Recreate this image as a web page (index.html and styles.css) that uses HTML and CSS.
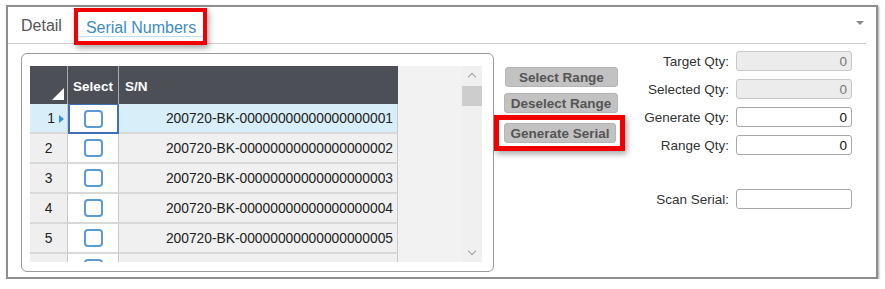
FILE: index.html
```html
<!DOCTYPE html>
<html lang="en">
<head>
    <meta charset="UTF-8">
    <title>Serial Numbers</title>
    <link rel="stylesheet" href="styles.css">
</head>
<body>

    <div class="frame">
        <div class="tab-bar">
            <span class="tab">Detail</span>
            <span class="tab active">Serial Numbers</span>
            <span class="caret"></span>
        </div>

        <div class="tab-body">
            <div class="panel">
                <div class="grid">
                    <div class="grid-main">
                        <div class="grid-row head">
                            <div class="cell num"><span class="corner"></span></div>
                            <div class="cell sel">Select</div>
                            <div class="cell sn">S/N</div>
                        </div>
                        <div class="grid-row current">
                            <div class="cell num">1<span class="marker"></span></div>
                            <div class="cell sel focus"><span class="check"></span></div>
                            <div class="cell sn">200720-BK-00000000000000000001</div>
                        </div>
                        <div class="grid-row">
                            <div class="cell num">2</div>
                            <div class="cell sel"><span class="check"></span></div>
                            <div class="cell sn">200720-BK-00000000000000000002</div>
                        </div>
                        <div class="grid-row">
                            <div class="cell num">3</div>
                            <div class="cell sel"><span class="check"></span></div>
                            <div class="cell sn">200720-BK-00000000000000000003</div>
                        </div>
                        <div class="grid-row">
                            <div class="cell num">4</div>
                            <div class="cell sel"><span class="check"></span></div>
                            <div class="cell sn">200720-BK-00000000000000000004</div>
                        </div>
                        <div class="grid-row">
                            <div class="cell num">5</div>
                            <div class="cell sel"><span class="check"></span></div>
                            <div class="cell sn">200720-BK-00000000000000000005</div>
                        </div>
                        <div class="grid-row">
                            <div class="cell num"></div>
                            <div class="cell sel"><span class="check"></span></div>
                            <div class="cell sn"></div>
                        </div>
                    </div>
                    <div class="scrollbar">
                        <span class="arrow up"></span>
                        <span class="thumb"></span>
                        <span class="arrow down"></span>
                    </div>
                </div>
            </div>

            <div class="actions">
                <button class="btn btn-select">Select Range</button>
                <button class="btn">Deselect Range</button>
                <div class="mark">
                    <button class="btn">Generate Serial</button>
                </div>
            </div>

            <div class="qty-form">
                <label>Target Qty:</label>
                <input type="text" value="0" disabled>
                <label>Selected Qty:</label>
                <input type="text" value="0" disabled>
                <label>Generate Qty:</label>
                <input type="text" value="0">
                <label>Range Qty:</label>
                <input type="text" value="0">
                <label class="scan">Scan Serial:</label>
                <input type="text" class="scan" value="">
            </div>
        </div>
    </div>

</body>
</html>
```

FILE: styles.css
```css
body {
    margin: 0;
    background-color: #fff;
    font-family: 'Liberation Sans', Arial, sans-serif;
    color: #333;
}

.frame {
    box-sizing: border-box;
    width: 872px;
    height: 274px;
    margin: 5px 0 0 6px;
    border: 2px solid #8e8e8e;
    box-shadow: 1px 1px 2px rgba(0, 0, 0, 0.35);
    background-color: #fff;
}

/* tabs */
.tab-bar {
    display: flex;
    align-items: center;
    height: 36px;
    margin-right: 10px;
    padding-left: 13px;
    border-bottom: 1px solid #cfcfcf;
}

.tab {
    font-size: 16px;
    color: #555;
    padding-top: 2px;
}

.tab.active {
    align-self: flex-start;
    box-sizing: border-box;
    height: 37px;
    margin: 1px 0 0 12px;
    padding: 2px 7px 0 8px;
    display: flex;
    align-items: center;
    color: #3d8cc4;
    border: 4px solid #f00000;
    box-shadow: 2px 3px 6px rgba(0, 0, 0, 0.35);
    background: linear-gradient(to top, transparent 4px, #c5dff0 4px, #c5dff0 5px, transparent 5px);
}

.caret {
    margin-left: auto;
    margin-right: 2px;
    margin-top: -4px;
    width: 0;
    height: 0;
    border-left: 4px solid transparent;
    border-right: 4px solid transparent;
    border-top: 4px solid #8a8a8a;
}

/* body of the tab */
.tab-body {
    display: flex;
    align-items: flex-start;
    padding: 8px 0 0 13px;
}

.panel {
    box-sizing: border-box;
    width: 473px;
    height: 219px;
    margin-top: 1px;
    padding: 12px 11px 0 8px;
    border: 1px solid #9a9a9a;
    border-radius: 6px;
}

.grid {
    display: flex;
    height: 196px;
    overflow: hidden;
    background-color: #f2f2f2;
}

.grid-main {
    width: 432px;
}

.grid-row {
    display: flex;
    height: 30px;
    font-size: 13.8px;
    color: #222;
}

.grid-row.head {
    height: 38px;
    color: #fff;
    font-weight: bold;
    font-size: 13.5px;
}

.cell {
    box-sizing: border-box;
    display: flex;
    align-items: center;
    border-right: 1px solid #c9c9c9;
    border-bottom: 2px solid #d9d9d9;
}

.head .cell {
    border-right: 1px solid #a9abb0;
    border-bottom: none;
}

.head .cell.sn {
    border-right: none;
}

.cell.num {
    position: relative;
    width: 38px;
    justify-content: center;
    background-color: #efefef;
}

.cell.sel {
    width: 51px;
    justify-content: center;
    background-color: #fff;
}

.cell.sn {
    width: 279px;
    justify-content: flex-end;
    padding-right: 4px;
    background-color: #f0f0f0;
}

.head .cell.num,
.head .cell.sel,
.head .cell.sn {
    background-color: #4d4f57;
}

.head .cell.sel {
    padding-top: 2px;
}

.head .cell.sn {
    justify-content: flex-start;
    padding-left: 6px;
    padding-top: 2px;
}

.current .cell.num,
.current .cell.sn {
    background-color: #d8eef8;
}

.cell.focus {
    border: 2px solid #3f6fb6;
    border-top: 1px solid #3f6fb6;
}

.check {
    box-sizing: border-box;
    width: 19px;
    height: 18px;
    border: 2px solid #5b9bd0;
    border-radius: 4px;
    background-color: #fff;
}

.corner {
    position: absolute;
    right: 3px;
    bottom: 4px;
    width: 0;
    height: 0;
    border-left: 12px solid transparent;
    border-bottom: 12px solid #fff;
}

.marker {
    position: absolute;
    right: 3px;
    top: 11px;
    width: 0;
    height: 0;
    border-top: 4px solid transparent;
    border-bottom: 4px solid transparent;
    border-left: 5px solid #2f8fe0;
}

.grid-row .cell.num {
    justify-content: flex-end;
    padding-right: 12px;
}

.head .cell.num {
    padding-right: 0;
}

.grid-row:nth-child(n+3) .cell.num {
    justify-content: center;
    padding-right: 0;
}

/* scrollbar */
.scrollbar {
    display: flex;
    flex-direction: column;
    align-items: center;
    width: 20px;
    background-color: #f0f0f0;
}

.arrow {
    width: 5px;
    height: 5px;
    border-left: 1.5px solid #a0a0a0;
    border-top: 1.5px solid #a0a0a0;
}

.arrow.up {
    margin-top: 8px;
    transform: rotate(45deg);
}

.arrow.down {
    margin-top: auto;
    margin-bottom: 8px;
    transform: rotate(225deg);
}

.thumb {
    width: 20px;
    height: 20px;
    margin-top: 6px;
    background-color: #cdcdcd;
}

/* buttons */
.actions {
    display: flex;
    flex-direction: column;
    align-items: flex-start;
    width: 134px;
    margin-top: 15px;
}

.btn {
    box-sizing: border-box;
    height: 20px;
    width: 114px;
    margin-left: 10px;
    padding: 0;
    font-family: 'Liberation Sans', Arial, sans-serif;
    font-size: 13.5px;
    font-weight: bold;
    color: #555;
    background-color: #c2c2c2;
    border: 1px solid #b5b5b5;
    border-radius: 3px;
    margin-bottom: 6px;
}

.btn-select {
    margin-left: 11px;
    width: 113px;
}

.mark {
    box-sizing: border-box;
    width: 131px;
    height: 36px;
    margin-top: -4px;
    border: 5px solid #f00000;
    box-shadow: 2px 3px 6px rgba(0, 0, 0, 0.35);
    padding-top: 3px;
}

.mark .btn {
    margin-left: 5px;
    margin-bottom: 0;
    width: 112px;
}

/* quantity form */
.qty-form {
    display: grid;
    grid-template-columns: auto 116px;
    column-gap: 7px;
    row-gap: 8px;
    align-items: center;
    margin-left: auto;
    margin-right: 24px;
    margin-top: -1px;
}

.qty-form label {
    font-size: 13.5px;
    text-align: right;
    color: #333;
}

.qty-form input {
    box-sizing: border-box;
    height: 20px;
    width: 116px;
    padding: 0 4px;
    text-align: right;
    font-family: 'Liberation Sans', Arial, sans-serif;
    font-size: 13.5px;
    color: #111;
    border: 1px solid #a8a8a8;
    border-radius: 3px;
    background-color: #fff;
}

.qty-form input:disabled {
    background-color: #ececec;
    border-color: #c8c8c8;
    color: #777;
}

.qty-form .scan {
    margin-top: 26px;
}
```
